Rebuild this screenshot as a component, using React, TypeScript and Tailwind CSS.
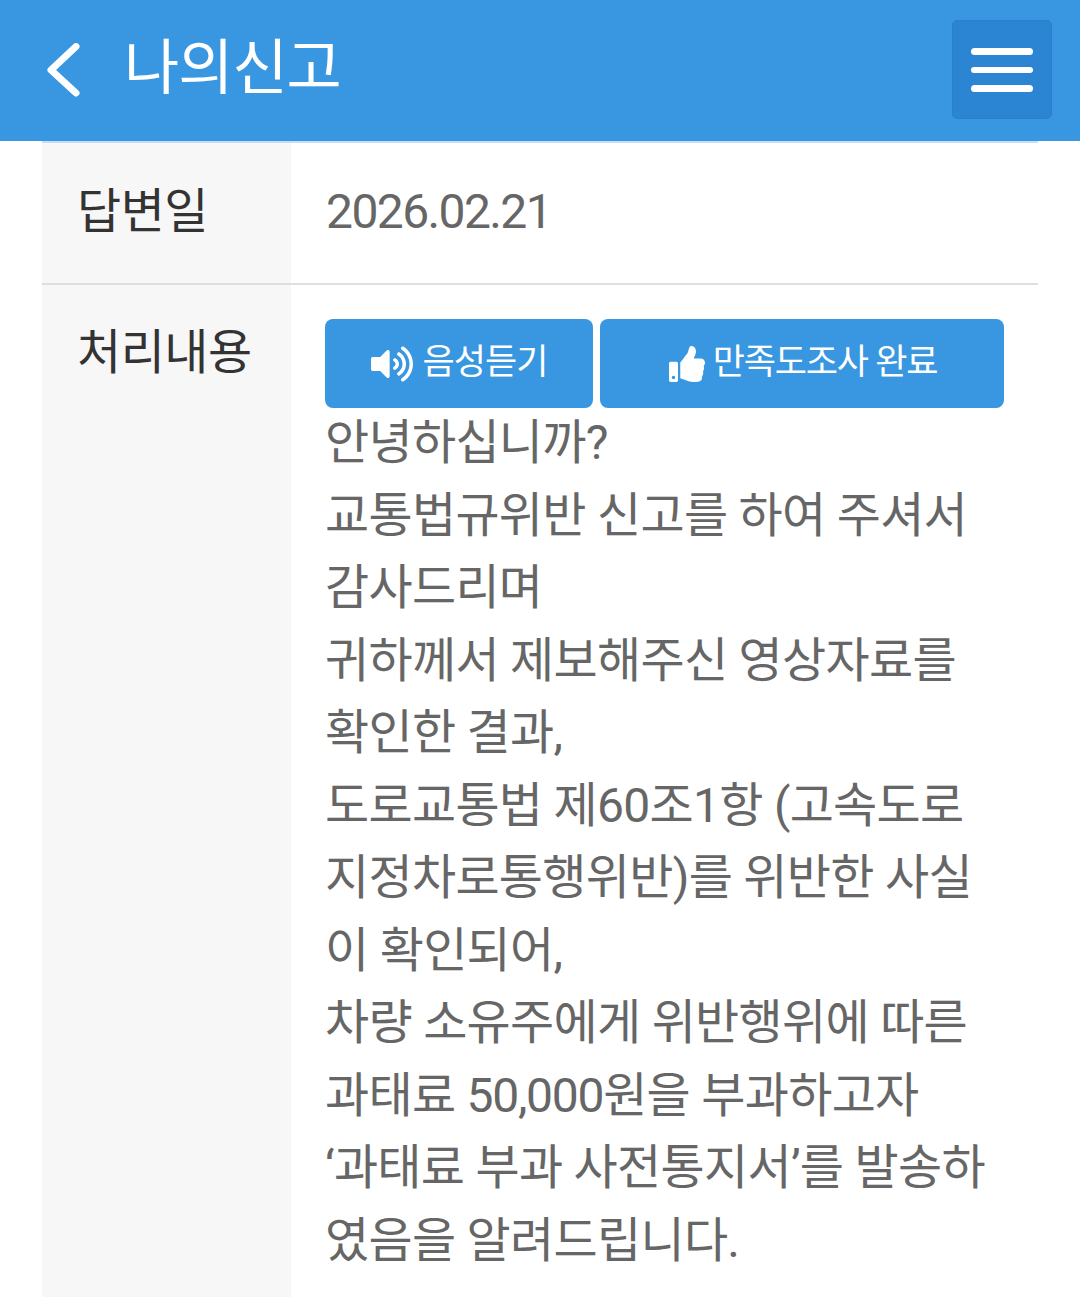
import { FaThumbsUp, FaVolumeUp } from "react-icons/fa";

const lines = [
  "안녕하십니까?",
  "교통법규위반 신고를 하여 주셔서",
  "감사드리며",
  "귀하께서 제보해주신 영상자료를",
  "확인한 결과,",
  "도로교통법 제60조1항 (고속도로",
  "지정차로통행위반)를 위반한 사실",
  "이 확인되어,",
  "차량 소유주에게 위반행위에 따른",
  <>
    과태료 <span className="tracking-[-1.3px]">50,000</span>원을 부과하고자
  </>,
  "‘과태료 부과 사전통지서’를 발송하",
  "였음을 알려드립니다.",
];

export default function App() {
  return (
    <div className="h-[1297px] w-[1080px] overflow-hidden bg-white font-['Roboto','Noto_Sans_CJK_KR',sans-serif]">
      {/* Header */}
      <header className="flex h-[141px] items-center justify-between bg-[#3897e0] pl-[45px] pr-[28px]">
        <div className="flex items-center">
          <svg width="36" height="56" viewBox="0 0 36 56" fill="none" className="mt-[1px]">
            <path d="M31 3.5 L6 27 L31 50" stroke="#fff" strokeWidth="7" strokeLinecap="round" strokeLinejoin="round" />
          </svg>
          <h1 className="ml-[43px] mt-[-4px] text-[60px] leading-none font-normal tracking-[-1px] text-white">나의신고</h1>
        </div>
        <button
          type="button"
          className="mt-[-2px] flex h-[99px] w-[100px] flex-col items-center justify-center gap-[12px] rounded-[5px] border border-[#2a80cb] bg-[#2b85d2]"
        >
          <span className="h-[7px] w-[62px] rounded-full bg-white" />
          <span className="h-[6px] w-[62px] rounded-full bg-white" />
          <span className="h-[7px] w-[62px] rounded-full bg-white" />
        </button>
      </header>

      {/* Detail table */}
      <div className="mx-[42px]">
        <div className="flex h-[144px] border-b-2 border-[#dedede]">
          <div className="w-[249px] border-t-2 border-[#c4dff6] bg-[#f7f7f7] pl-[35px] pt-[33px] text-[48px] leading-[72px] tracking-[-0.5px] text-[#333]">
            답변일
          </div>
          <div className="flex-1 border-t-2 border-[#c4dff6] pl-[35px] pt-[33px] text-[48px] leading-[72px] tracking-[-1.6px] text-[#666]">
            2026.02.21
          </div>
        </div>
        <div className="flex h-[1012px]">
          <div className="w-[249px] bg-[#f7f7f7] pl-[35px] pt-[32px] text-[48px] leading-[72px] tracking-[-0.5px] text-[#333]">
            처리내용
          </div>
          <div className="flex-1 pl-[34px] pt-[34px]">
            <div className="flex gap-[7px]">
              <button
                type="button"
                className="flex h-[89px] w-[268px] items-center justify-center gap-[10px] rounded-[8px] bg-[#3897e0] text-[35px] tracking-[-1px] text-white"
              >
                <FaVolumeUp className="h-[42px] w-[42px]" />
                음성듣기
              </button>
              <button
                type="button"
                className="flex h-[89px] w-[404px] items-center justify-center gap-[8px] rounded-[8px] bg-[#3897e0] pl-[2px] text-[35px] tracking-[-1.2px] text-white"
              >
                <FaThumbsUp className="h-[36px] w-[36px]" />
                만족도조사 완료
              </button>
            </div>
            <div className="mt-[-1px] text-[48px] leading-[72.5px] tracking-[-0.7px] whitespace-nowrap text-[#666]">
              {lines.map((line, i) => (
                <div key={i}>{line}</div>
              ))}
            </div>
          </div>
        </div>
      </div>
    </div>
  );
}
